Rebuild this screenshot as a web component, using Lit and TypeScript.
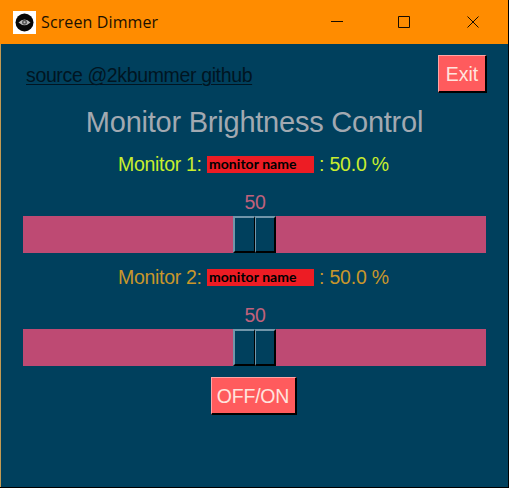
import { LitElement, html, css } from "lit";
import { customElement, property } from "lit/decorators.js";

@customElement("monitor-slider")
class MonitorSlider extends LitElement {
  @property({ type: Number }) index = 1;
  @property({ type: Number }) value = 50;

  static styles = css`
    :host { display: block; height: 113px; }
    .label {
      display: flex; align-items: center; height: 24px; padding-left: 117px;
      font-size: 19.5px; color: #c9ee2e; white-space: pre;
    }
    :host(.amber) .label { color: #c9972b; }
    .name { width: 84px; padding-left: 1px; letter-spacing: -0.3px; }
    .percent { letter-spacing: -0.2px; }
    .chip {
      width: 105px; height: 17px; margin: 0 5px 0 5px; padding-left: 2px; box-sizing: content-box;
      background: #ed1c24; color: #000; font: bold 14px/16px Lato, sans-serif; letter-spacing: 0.05px;
    }
    .value {
      height: 24px; margin-top: 14px; padding-left: 1px; text-align: center; line-height: 24px;
      font-size: 19.5px; letter-spacing: -0.4px; color: #c0627c;
    }
    .track { display: flex; justify-content: center; height: 37px; margin: 2px 23px 0; background: #be4a73; }
    .thumb { display: flex; width: 43px; height: 37px; }
    .half {
      box-sizing: border-box; flex: 1; background: #00405d;
      border: 2px solid; border-color: #7196aa #000 #000 #7196aa;
    }
    .half:first-child { border-right-width: 1px; }
    .half:last-child { border-left-width: 1px; }
  `;

  render() {
    return html`
      <div class="label"><span class="name">Monitor ${this.index}:</span><span class="chip">monitor name</span><span class="percent">: ${this.value.toFixed(1)} %</span></div>
      <div class="value">${this.value}</div>
      <div class="track"><div class="thumb"><div class="half"></div><div class="half"></div></div></div>
    `;
  }
}

@customElement("app-root")
class AppRoot extends LitElement {
  static styles = css`
    :host {
      display: block; box-sizing: border-box; width: 509px; height: 488px; overflow: hidden;
      background: #00405d; border-right: 1px solid #000; border-bottom: 1px solid #000;
      font-family: "Liberation Sans", Arial, sans-serif;
    }
    .titlebar { display: flex; align-items: center; height: 44px; padding-left: 13px; background: #ff8c00; }
    .titlebar svg { display: block; }
    .title { flex: 1; margin-left: 5px; font: 16px/24px "Open Sans", sans-serif; letter-spacing: 0.12px; color: #1b1000; white-space: nowrap; }
    .content { box-sizing: border-box; height: 443px; padding-top: 11px; border-left: 1px solid #c29a52; }
    .top { display: flex; justify-content: space-between; height: 39px; padding: 0 21px 0 25px; }
    .link { margin-top: 8px; height: 24px; line-height: 24px; font-size: 19.5px; letter-spacing: -0.36px; color: #001522; text-decoration: underline; text-decoration-thickness: 1px; text-underline-offset: 2px; }
    .button {
      box-sizing: border-box; height: 38px; background: #ff5b5d; color: #ffe4de;
      border: 2px solid; border-color: #ffa5a6 #000 #000 #ffa5a6; border-top-width: 1px; border-left-width: 1px;
      font-size: 19.5px; line-height: 37px; text-align: center; white-space: nowrap;
    }
    .exit { width: 49px; }
    .power { width: 86px; margin: 0 auto; position: relative; left: -1px; letter-spacing: -0.2px; }
    .heading { height: 36px; margin: 10px 0 12px; line-height: 36px; font-size: 29px; letter-spacing: -0.23px; text-align: center; color: #a2a9b1; }
    .sliders { height: 225px; margin-left: -1px; margin-right: -1px; }
  `;

  render() {
    return html`
      <div class="titlebar">
        <svg width="23" height="23" viewBox="0 0 23 23">
          <rect width="23" height="23" fill="#fff" />
          <circle cx="11.5" cy="11.5" r="9" fill="#080808" />
          <path d="M5.5 11.5Q11.5 5.5 17.5 11.5Q11.5 17 5.5 11.5Z" fill="#bbb" />
          <circle cx="11.5" cy="11.3" r="2.5" fill="#555" />
          <circle cx="11.5" cy="11.3" r="1" fill="#bbb" />
        </svg>
        <span class="title">Screen Dimmer</span>
        <svg width="177" height="44" viewBox="331 0 177 44" fill="none" stroke="#170c00">
          <path d="M331 21.5h12M398.500 16.500h11v11h-11zM467.500 16.500l11 11M478.500 16.500l-11 11" />
        </svg>
      </div>
      <div class="content">
        <div class="top">
          <span class="link">source @2kbummer github</span>
          <div class="button exit">Exit</div>
        </div>
        <div class="heading">Monitor Brightness Control</div>
        <div class="sliders">
          <monitor-slider .index=${1}></monitor-slider>
          <monitor-slider class="amber" .index=${2}></monitor-slider>
        </div>
        <div class="button power">OFF/ON</div>
      </div>
    `;
  }
}
